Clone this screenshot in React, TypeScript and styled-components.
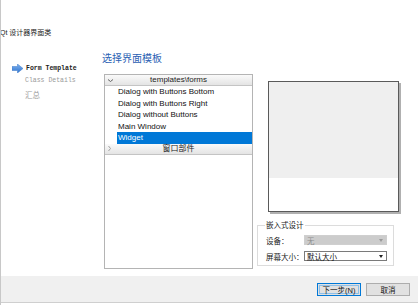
import React from 'react';
import styled, { createGlobalStyle } from 'styled-components';

const GlobalStyle = createGlobalStyle`
  html, body { margin: 0; padding: 0; background: #fff; }
  body { font-family: "Liberation Sans", "Noto Sans CJK SC", sans-serif; }
`;

const cjk = `"Liberation Sans", "Noto Sans CJK SC", sans-serif`;

const Window = styled.div`
  width: 418px;
  height: 305px;
  box-sizing: border-box;
  border-left: 1px solid #c8c8c8;
  display: flex;
  flex-direction: column;
  overflow: hidden;
  background: #fff;
`;

const Title = styled.div`
  font-family: ${cjk};
  font-size: 7px;
  line-height: 10px;
  margin: 28px 0 0 -1px;
  color: #222;
`;

const Body = styled.div`
  flex: 1;
  display: flex;
  margin-top: 15px;
`;

const Sidebar = styled.div`
  width: 101px;
  display: flex;
  flex-direction: column;
  padding-top: 9px;
`;

const Step = styled.div<{ $active?: boolean }>`
  display: flex;
  align-items: center;
  height: 12px;
  padding-left: ${p => (p.$active ? 11 : 24)}px;
  font-family: "Liberation Mono", "Noto Sans CJK SC", monospace;
  font-size: 6.5px;
  font-weight: ${p => (p.$active ? 700 : 400)};
  color: ${p => (p.$active ? '#222' : '#9a9a9a')};
  gap: 3px;
`;

const CjkStep = styled(Step)`
  font-family: ${cjk};
  font-size: 7.5px;
  height: 16px;
`;

const Content = styled.div`
  flex: 1;
  display: flex;
  flex-direction: column;
`;

const Heading = styled.div`
  font-family: ${cjk};
  font-size: 10px;
  line-height: 12px;
  color: #2b5fb3;
  margin-bottom: 9px;
`;

const Row = styled.div`
  display: flex;
`;

const Tree = styled.div`
  margin-left: 2px;
  width: 149px;
  height: 195px;
  box-sizing: border-box;
  border: 1px solid #b4b4b4;
  display: flex;
  flex-direction: column;
  font-size: 8px;
`;

const Category = styled.div`
  position: relative;
  height: 10px;
  line-height: 10px;
  text-align: center;
  background: linear-gradient(#fafafa, #e4e4e4);
  border-bottom: 1px solid #c4c4c4;
  color: #222;
  font-family: ${cjk};
`;

const Chevron = styled.span`
  position: absolute;
  left: 2px;
  top: 0;
  height: 10px;
  display: flex;
  align-items: center;
`;

const Item = styled.div<{ $selected?: boolean }>`
  margin-left: 12px;
  height: 11.5px;
  line-height: 11.5px;
  padding-left: 1px;
  color: ${p => (p.$selected ? '#fff' : '#111')};
  background: ${p => (p.$selected ? '#0078d7' : 'transparent')};
`;

const RightCol = styled.div`
  margin-left: 4px;
  width: 137px;
  display: flex;
  flex-direction: column;
`;

const Preview = styled.div`
  margin: 7px 0 0 11px;
  width: 131px;
  height: 131px;
  box-sizing: border-box;
  border: 1px solid #5a5a5a;
  box-shadow: 2px 2px 0 #b0b0b0;
  display: flex;
  flex-direction: column;
`;

const PreviewTop = styled.div`
  height: 96px;
  background: #efefef;
`;

const Group = styled.fieldset`
  margin: 9px 0 0 0;
  padding: 5px 6px 4px 8px;
  height: 45px;
  box-sizing: border-box;
  border: 1px solid #dcdcdc;
  display: flex;
  flex-direction: column;
  gap: 6px;
  font-family: ${cjk};
  font-size: 7.5px;
  color: #222;
  legend {
    padding: 0 1px;
    margin-left: -1px;
    line-height: 9px;
  }
`;

const Field = styled.div`
  display: flex;
  align-items: center;
  height: 10px;
`;

const FieldLabel = styled.span`
  width: 38px;
`;

const Combo = styled.div<{ $disabled?: boolean }>`
  flex: 1;
  height: 10px;
  box-sizing: border-box;
  display: flex;
  align-items: center;
  justify-content: space-between;
  padding: 0 3px 0 2px;
  border: 1px solid ${p => (p.$disabled ? '#cfcfcf' : '#7a7a7a')};
  background: ${p => (p.$disabled ? '#cccccc' : '#fff')};
  color: ${p => (p.$disabled ? '#8c8c8c' : '#111')};
`;

const Caret = styled.span<{ $disabled?: boolean }>`
  width: 0;
  height: 0;
  border-left: 2.5px solid transparent;
  border-right: 2.5px solid transparent;
  border-top: 3px solid ${p => (p.$disabled ? '#999' : '#222')};
`;

const Footer = styled.div`
  height: 26px;
  margin-bottom: 2px;
  background: #f0f0f0;
  border-bottom: 1px solid #cfcfcf;
  display: flex;
  align-items: center;
  justify-content: flex-end;
  gap: 5px;
  padding-right: 8px;
`;

const Button = styled.button<{ $default?: boolean }>`
  width: 44px;
  height: 13px;
  box-sizing: border-box;
  padding: 0;
  font-family: ${cjk};
  font-size: 7.5px;
  color: #111;
  background: #e1e1e1;
  border: 1px solid ${p => (p.$default ? '#0078d7' : '#adadad')};
  box-shadow: ${p => (p.$default ? 'inset 0 0 0 1px #e1e1e1, inset 0 0 0 2px #8cbfe8' : 'none')};
`;

const Arrow = () => (
  <svg width="11" height="9" viewBox="0 0 11 9">
    <defs>
      <linearGradient id="ag" x1="0" y1="0" x2="0" y2="1">
        <stop offset="0" stopColor="#7fb2ee" />
        <stop offset="1" stopColor="#2f74d0" />
      </linearGradient>
    </defs>
    <polygon points="0,2.5 5.5,2.5 5.5,0 11,4.5 5.5,9 5.5,6.5 0,6.5" fill="url(#ag)" stroke="#3a78c8" strokeWidth="0.5" />
  </svg>
);

const Down = () => (
  <svg width="7" height="5" viewBox="0 0 7 5">
    <path d="M1 1.5 L3.5 3.5 L6 1.5" fill="none" stroke="#555" strokeWidth="0.9" />
  </svg>
);

const Right = () => (
  <svg width="5" height="7" viewBox="0 0 5 7">
    <path d="M1.5 1 L3.5 3.5 L1.5 6" fill="none" stroke="#999" strokeWidth="0.9" />
  </svg>
);

const templates = [
  'Dialog with Buttons Bottom',
  'Dialog with Buttons Right',
  'Dialog without Buttons',
  'Main Window',
  'Widget',
];

export default function App() {
  return (
    <>
      <GlobalStyle />
      <Window>
        <Title>Qt 设计器界面类</Title>
        <Body>
          <Sidebar>
            <Step $active>
              <Arrow />
              Form Template
            </Step>
            <Step>Class Details</Step>
            <CjkStep>汇总</CjkStep>
          </Sidebar>
          <Content>
            <Heading>选择界面模板</Heading>
            <Row>
              <Tree>
                <Category>
                  <Chevron><Down /></Chevron>
                  templates\forms
                </Category>
                {templates.map(t => (
                  <Item key={t} $selected={t === 'Widget'}>{t}</Item>
                ))}
                <Category>
                  <Chevron><Right /></Chevron>
                  窗口部件
                </Category>
              </Tree>
              <RightCol>
                <Preview>
                  <PreviewTop />
                </Preview>
                <Group>
                  <legend>嵌入式设计</legend>
                  <Field>
                    <FieldLabel>设备：</FieldLabel>
                    <Combo $disabled>无<Caret $disabled /></Combo>
                  </Field>
                  <Field>
                    <FieldLabel>屏幕大小：</FieldLabel>
                    <Combo>默认大小<Caret /></Combo>
                  </Field>
                </Group>
              </RightCol>
            </Row>
          </Content>
        </Body>
        <Footer>
          <Button $default>下一步(N)</Button>
          <Button>取消</Button>
        </Footer>
      </Window>
    </>
  );
}
